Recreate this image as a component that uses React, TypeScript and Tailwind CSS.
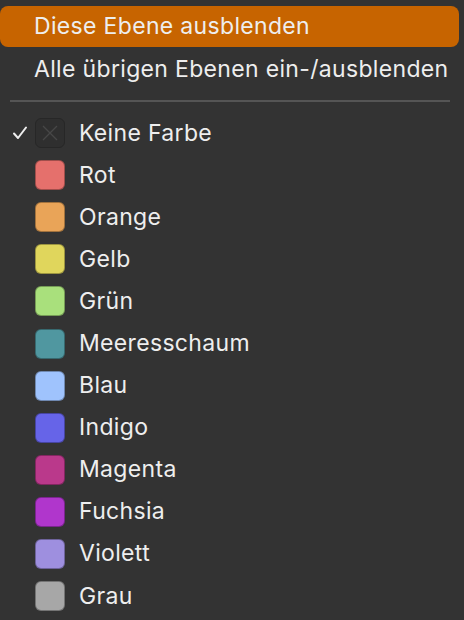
const colors: { name: string; color: string | null }[] = [
  { name: 'Keine Farbe', color: null },
  { name: 'Rot', color: '#e5706c' },
  { name: 'Orange', color: '#e9a458' },
  { name: 'Gelb', color: '#e0d65c' },
  { name: 'Grün', color: '#a9e07c' },
  { name: 'Meeresschaum', color: '#5097a0' },
  { name: 'Blau', color: '#9fc3fd' },
  { name: 'Indigo', color: '#6664e8' },
  { name: 'Magenta', color: '#ba398b' },
  { name: 'Fuchsia', color: '#b036cc' },
  { name: 'Violett', color: '#9e8fdf' },
  { name: 'Grau', color: '#a7a7a7' },
];

function Swatch({ color }: { color: string | null }) {
  if (!color) {
    return (
      <div className="w-[30px] h-[30px] rounded-[6px] border border-[#272727] bg-[#2f2f2f] flex items-center justify-center">
        <svg width="20" height="20" viewBox="0 0 20 20">
          <path d="M3 3 L17 17 M17 3 L3 17" stroke="#474747" strokeWidth="1.3" />
        </svg>
      </div>
    );
  }
  return (
    <div
      className="w-[30px] h-[30px] rounded-[6px] border border-black/30"
      style={{ backgroundColor: color }}
    />
  );
}

export default function App() {
  return (
    <div
      className="w-[464px] h-[620px] bg-[#333333] text-[#eeeeee] text-[23px] leading-none tracking-[0.33px] overflow-hidden"
      style={{ fontFamily: 'Inter, "Noto Sans", sans-serif' }}
    >
      <div className="pt-[6px]">
        <div className="mr-[5px] h-[41px] rounded-[8px] bg-[#c76400] flex items-center pl-[34px]">
          Diese Ebene ausblenden
        </div>
        <div className="h-[44px] flex items-center pl-[34px]">Alle übrigen Ebenen ein-/ausblenden</div>
        <div className="ml-[10px] mt-[9px] mb-[10px] h-[2px] bg-[#555555] w-[440px]" />
      </div>
      <div>
        {colors.map((c, i) => (
          <div key={c.name} className="h-[42.1px] flex items-center">
            <div className="w-[35px] flex justify-center pl-[4px]">
              {i === 0 && (
                <svg width="16" height="14" viewBox="0 0 16 14">
                  <path d="M2 7.5 L6 12 L14 1.5" stroke="#eeeeee" strokeWidth="2" fill="none" strokeLinecap="round" strokeLinejoin="round" />
                </svg>
              )}
            </div>
            <Swatch color={c.color} />
            <span className="ml-[14px]">{c.name}</span>
          </div>
        ))}
      </div>
    </div>
  );
}
